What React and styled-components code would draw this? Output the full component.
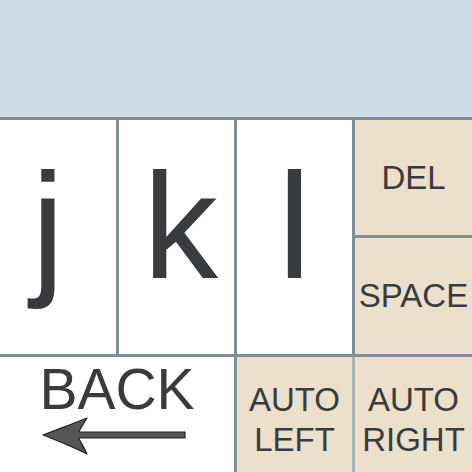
import React from "react";
import styled, { createGlobalStyle } from "styled-components";

const Global = createGlobalStyle`
  html, body { margin: 0; padding: 0; background: #ffffff; }
  body { font-family: "Liberation Sans", Arial, sans-serif; }
  * { box-sizing: border-box; }
`;

const Page = styled.div`
  width: 472px;
  height: 472px;
  overflow: hidden;
  display: flex;
  flex-direction: column;
  background: #7f8e98;
`;

const Display = styled.div`
  height: 117px;
  flex: none;
  background: #cfdce6;
`;

const Keys = styled.div`
  margin-top: 3px;
  flex: 1;
  display: grid;
  grid-template-columns: 116px 115px 115px 1fr;
  grid-template-rows: 115px 116px 1fr;
  gap: 3px;
  background: #7f8e98;
`;

const Key = styled.div`
  display: flex;
  flex-direction: column;
  align-items: center;
  justify-content: center;
  background: ${(p) => (p.$action ? "#ecdfcb" : "#ffffff")};
  color: #3a3b3e;
  grid-column: ${(p) => p.$col || "auto"};
  grid-row: ${(p) => p.$row || "auto"};
  font-size: ${(p) => p.$size || 33}px;
  line-height: ${(p) => p.$lh || "40px"};
  text-align: center;
  padding-top: ${(p) => p.$pt || 0}px;
  padding-bottom: ${(p) => p.$pb || 0}px;
`;

const SoftSplitKey = styled(Key)`
  margin-left: -3px;
  border-left: 3px solid #a9b0b2;
`;

const Letter = styled.span`
  display: block;
  transform: translateX(${(p) => p.$dx || 0}px);
`;

const Arrow = styled.svg`
  display: block;
  margin-top: 0px;
  margin-right: 6px;
`;

function BackArrow() {
  return (
    <Arrow width="146" height="40" viewBox="0 0 146 40">
      <path
        d="M2 18 C 20 11, 34 6, 46 1 C 42 8, 38 13, 38 15 L 144 15 L 144 21 L 38 21 C 38 23, 42 28, 46 37 C 34 31, 20 25, 2 18 Z"
        fill="#555555"
        stroke="#222222"
        strokeWidth="1.2"
        strokeLinejoin="round"
      />
    </Arrow>
  );
}

export default function App() {
  return (
    <>
      <Global />
      <Page>
        <Display />
        <Keys>
          <Key $col="1" $row="1 / span 2" $size={150} $lh="150px" $pb={22}>
            <Letter $dx={-10}>j</Letter>
          </Key>
          <Key $col="2" $row="1 / span 2" $size={150} $lh="150px" $pb={22}>
            <Letter $dx={4}>k</Letter>
          </Key>
          <Key $col="3" $row="1 / span 2" $size={150} $lh="150px" $pb={22}>
            <Letter>l</Letter>
          </Key>
          <Key $action $col="4" $row="1">
            DEL
          </Key>
          <Key $action $col="4" $row="2">
            SPACE
          </Key>
          <Key $col="1 / span 2" $row="3" $size={57} $lh="56px" $pb={12}>
            <span>BACK</span>
            <BackArrow />
          </Key>
          <Key $action $col="3" $row="3" $pt={10}>
            AUTO
            <br />
            LEFT
          </Key>
          <SoftSplitKey $action $col="4" $row="3" $pt={10}>
            AUTO
            <br />
            RIGHT
          </SoftSplitKey>
        </Keys>
      </Page>
    </>
  );
}
